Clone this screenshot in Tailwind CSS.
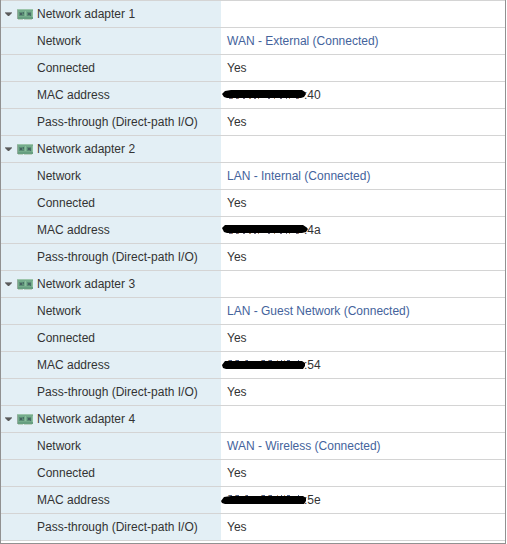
<!DOCTYPE html>
<html lang="en">
<head>
    <meta charset="UTF-8">
    <meta name="viewport" content="width=device-width, initial-scale=1.0">
    <title>Network adapters</title>
    <script src="https://cdn.jsdelivr.net/npm/@tailwindcss/browser@4"></script>
</head>
<body class="bg-white font-['Liberation_Sans',Arial,sans-serif] text-[12px] leading-4 text-[#333333]">
    <!-- Shared drawings -->
    <svg class="hidden">
        <symbol id="arrow" viewBox="0 0 8 5">
            <path d="M0 0h7v1H0z" fill="#8a8f92"/>
            <path d="M0 1h7L4 4H3z" fill="#5a5a5a"/>
        </symbol>
        <symbol id="card" viewBox="0 0 16 11">
            <path d="M0 0h16v10H0z" fill="#74ab8b"/>
            <path d="M0 0h16v1H0z" fill="#9cc5ab"/>
            <path d="M0 1h1v9H0z" fill="#93aa9c"/>
            <path d="M1 8h15v2H1z" fill="#679f80"/>
            <path d="M2 3h5v4H2zM10 3h4v4h-4z" fill="#5a8c74"/>
            <path d="M3 4h2v2H3zM11 4h2v2h-2z" fill="#456160"/>
            <path d="M6 3h1v2H6zM13 4h1v3h-1z" fill="#486f66"/>
            <path d="M8 2h1v5H8zM15 2h1v6h-1z" fill="#8bbf9d"/>
            <path d="M1 10h5v1H1zM7 10h8v1H7z" fill="#bccfc2"/>
        </symbol>
        <symbol id="below" viewBox="0 0 83 14">
            <path d="M8 10.5h3m4 0h2m5 0h2m9 0h2m12 0h2m10 0h2m4 0h1m9 0h2" stroke="#6f6a80" fill="none"/>
            <path d="M11 10.5h1m5 0h1m10 0h2m7 0h1m15 0h1m14 0h1m8 0h1" stroke="#b08968" fill="none"/>
        </symbol>
        <symbol id="above" viewBox="0 0 83 14">
            <path d="M8 2.5h3m4 0h3m7 0h2m14 0h3m4 0h3m9 0h1m5 0h3m8 0h1" stroke="#4f6288" fill="none"/>
            <path d="M7 2.5h1m6 0h1m9 0h1m15 0h1m6 0h1m8 0h1m6 0h1" stroke="#c49a70" fill="none"/>
        </symbol>
    </svg>

    <main class="mr-px border-x border-b border-[#919191] pb-[2px]">
        <table class="w-full table-fixed border-collapse text-left [&_tr]:h-[27px] [&_tr]:border-y [&_tr]:border-[#d4d4d4] [&_th]:bg-[#e3eff5] [&_th]:p-0 [&_th]:font-normal [&_td]:p-0 [&_td]:pl-[6px] [&_tbody_th]:pl-9 [&_a]:text-[#44639c]">
            <colgroup>
                <col class="w-[220px]">
                <col>
            </colgroup>
            <tbody>
                <tr>
                    <th scope="rowgroup" class="pl-[4px]!">
                        <button type="button" aria-expanded="true" class="flex items-center">
                            <svg class="mr-[4px] h-[5px] w-[8px]"><use href="#arrow"/></svg>
                            <svg class="mr-[4px] h-[11px] w-[16px]"><use href="#card"/></svg>
                            Network adapter 1
                        </button>
                    </th>
                    <td></td>
                </tr>
                <tr><th scope="row">Network</th><td><a href="#">WAN - External (Connected)</a></td></tr>
                <tr><th scope="row">Connected</th><td>Yes</td></tr>
                <tr>
                    <th scope="row">MAC address</th>
                    <td class="pl-0!">
                        <div class="flex items-center">
                            <svg class="z-10 h-[14px] w-[83px] overflow-visible" viewBox="0 0 83 14">
                                <use href="#below"/>
                                <path d="M1 6L4 3l6-1h71l3 2 1 2-2 3-3 1H6L3 9z"/>
                            </svg>
                            <span>:40</span>
                        </div>
                    </td>
                </tr>
                <tr><th scope="row">Pass-through (Direct-path I/O)</th><td>Yes</td></tr>
            </tbody>
            <tbody>
                <tr>
                    <th scope="rowgroup" class="pl-[4px]!">
                        <button type="button" aria-expanded="true" class="flex items-center">
                            <svg class="mr-[4px] h-[5px] w-[8px]"><use href="#arrow"/></svg>
                            <svg class="mr-[4px] h-[11px] w-[16px]"><use href="#card"/></svg>
                            Network adapter 2
                        </button>
                    </th>
                    <td></td>
                </tr>
                <tr><th scope="row">Network</th><td><a href="#">LAN - Internal (Connected)</a></td></tr>
                <tr><th scope="row">Connected</th><td>Yes</td></tr>
                <tr>
                    <th scope="row">MAC address</th>
                    <td class="pl-0!">
                        <div class="flex items-center">
                            <svg class="z-10 h-[14px] w-[83px] overflow-visible" viewBox="0 0 83 14">
                                <use href="#below"/>
                                <path d="M1 5L4 2h78l3 2 2 2-2 3-4 1H6L3 9z"/>
                            </svg>
                            <span>:4a</span>
                        </div>
                    </td>
                </tr>
                <tr><th scope="row">Pass-through (Direct-path I/O)</th><td>Yes</td></tr>
            </tbody>
            <tbody>
                <tr>
                    <th scope="rowgroup" class="pl-[4px]!">
                        <button type="button" aria-expanded="true" class="flex items-center">
                            <svg class="mr-[4px] h-[5px] w-[8px]"><use href="#arrow"/></svg>
                            <svg class="mr-[4px] h-[11px] w-[16px]"><use href="#card"/></svg>
                            Network adapter 3
                        </button>
                    </th>
                    <td></td>
                </tr>
                <tr><th scope="row">Network</th><td><a href="#">LAN - Guest Network (Connected)</a></td></tr>
                <tr><th scope="row">Connected</th><td>Yes</td></tr>
                <tr>
                    <th scope="row">MAC address</th>
                    <td class="pl-0!">
                        <div class="flex items-center">
                            <svg class="z-10 h-[14px] w-[83px] overflow-visible" viewBox="0 0 83 14">
                                <use href="#above"/>
                                <path d="M1 7l3-4h77l3 2v3l-2 3H5L2 10z"/>
                            </svg>
                            <span>:54</span>
                        </div>
                    </td>
                </tr>
                <tr><th scope="row">Pass-through (Direct-path I/O)</th><td>Yes</td></tr>
            </tbody>
            <tbody>
                <tr>
                    <th scope="rowgroup" class="pl-[4px]!">
                        <button type="button" aria-expanded="true" class="flex items-center">
                            <svg class="mr-[4px] h-[5px] w-[8px]"><use href="#arrow"/></svg>
                            <svg class="mr-[4px] h-[11px] w-[16px]"><use href="#card"/></svg>
                            Network adapter 4
                        </button>
                    </th>
                    <td></td>
                </tr>
                <tr><th scope="row">Network</th><td><a href="#">WAN - Wireless (Connected)</a></td></tr>
                <tr><th scope="row">Connected</th><td>Yes</td></tr>
                <tr>
                    <th scope="row">MAC address</th>
                    <td class="pl-0!">
                        <div class="flex items-center">
                            <svg class="z-10 h-[14px] w-[83px] overflow-visible" viewBox="0 0 83 14">
                                <use href="#above"/>
                                <path d="M0 8l3-4 7-1h72l3 2v3l-2 3H4L1 10z"/>
                            </svg>
                            <span>:5e</span>
                        </div>
                    </td>
                </tr>
                <tr><th scope="row">Pass-through (Direct-path I/O)</th><td>Yes</td></tr>
            </tbody>
        </table>
    </main>
</body>
</html>
